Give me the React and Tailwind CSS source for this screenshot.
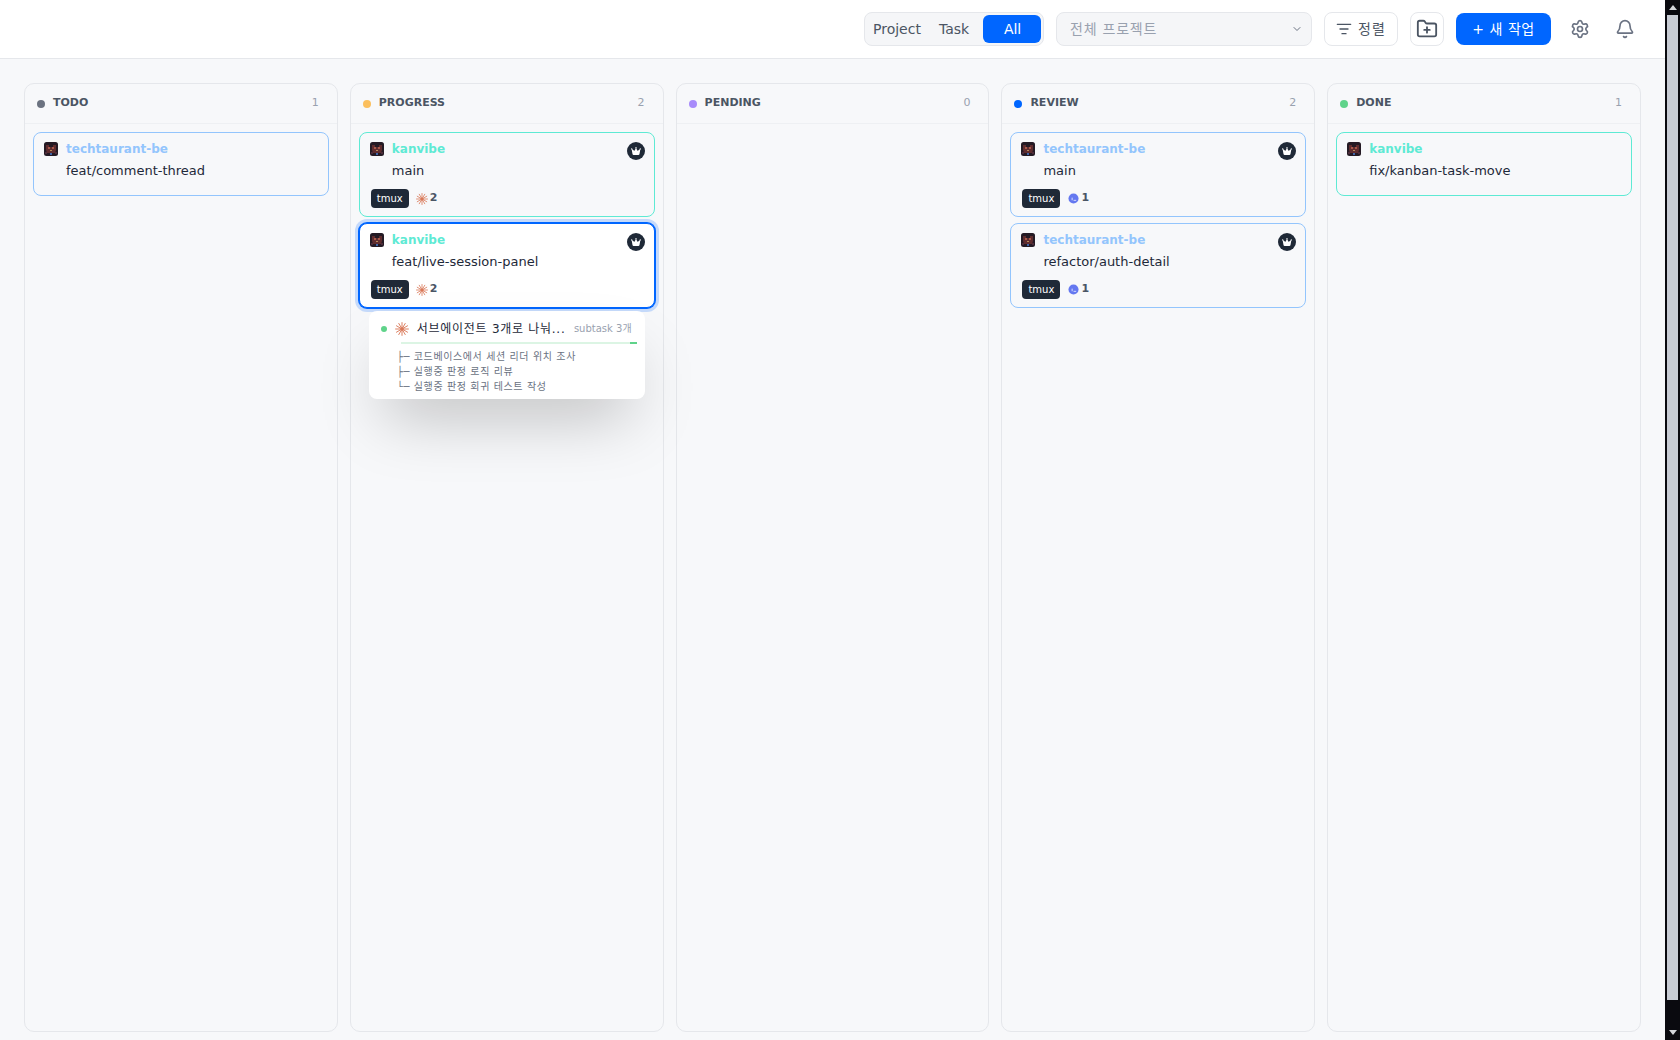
import React from "react";
import { ChevronDown, ListFilter, FolderPlus, Settings, Bell } from "lucide-react";
import { FaCrown } from "react-icons/fa6";

const COLUMNS = [
  {
    title: "TODO",
    dot: "bg-[#6b7280]",
    count: 1,
    cards: [{ project: "techtaurant-be", branch: "feat/comment-thread" }],
  },
  {
    title: "PROGRESS",
    dot: "bg-[#fbbf5d]",
    count: 2,
    cards: [
      { project: "kanvibe", branch: "main", leader: true, agent: "claude", agents: 2 },
      { project: "kanvibe", branch: "feat/live-session-panel", leader: true, agent: "claude", agents: 2, selected: true },
    ],
  },
  { title: "PENDING", dot: "bg-[#a78bfa]", count: 0, cards: [] },
  {
    title: "REVIEW",
    dot: "bg-[#0066ff]",
    count: 2,
    cards: [
      { project: "techtaurant-be", branch: "main", leader: true, agent: "blue", agents: 1 },
      { project: "techtaurant-be", branch: "refactor/auth-detail", leader: true, agent: "blue", agents: 1 },
    ],
  },
  {
    title: "DONE",
    dot: "bg-[#5fd38a]",
    count: 1,
    cards: [{ project: "kanvibe", branch: "fix/kanban-task-move" }],
  },
];

const SUBTASKS = [
  "├─ 코드베이스에서 세션 리더 위치 조사",
  "├─ 실행중 판정 로직 리뷰",
  "└─ 실행중 판정 회귀 테스트 작성",
];

const Burst = ({ className }) => (
  <svg viewBox="0 0 24 24" className={className} stroke="#d97757" strokeWidth="1.6" strokeLinecap="round">
    <path d="M12 1v22M1 12h22M6.5 2.5l11 19M17.5 2.5l-11 19M2.5 6.5l19 11M21.5 6.5l-19 11" />
    <circle cx="12" cy="12" r="3" fill="#d97757" stroke="none" />
  </svg>
);

const BlueAgent = ({ className }) => (
  <svg viewBox="0 0 24 24" className={className}>
    <circle cx="12" cy="12" r="11" fill="#6478f0" />
    <path d="M9 11v4M13 16h4" stroke="#dfe4ff" strokeWidth="2" strokeLinecap="round" />
  </svg>
);

const Avatar = () => (
  <svg viewBox="0 0 14 14" className="h-3.5 w-3.5 shrink-0">
    <rect width="14" height="14" rx="2.5" fill="#241a24" />
    <path d="M2 3h3v2h4V3h3v5l-1 3H3L2 8z" fill="#5f2c2e" />
    <rect x="4" y="5" width="2" height="2" fill="#a8584a" />
    <rect x="8" y="5" width="2" height="2" fill="#a8584a" />
    <rect x="6" y="8" width="2" height="1" fill="#b88a5a" />
    <rect x="6" y="11" width="2" height="2" fill="#3f64a8" />
    <rect x="1" y="10" width="2" height="2" fill="#4d2c3a" />
    <rect x="11" y="10" width="2" height="2" fill="#4d2c3a" />
  </svg>
);

const Popover = () => (
  <div className="absolute left-[9px] right-[9px] top-[calc(100%+4px)] z-10 h-[88px] rounded-lg bg-white shadow-[0_32px_64px_-16px_rgba(0,0,0,0.25)]">
    <div className="box-border flex h-[31px] items-center pl-3 pr-[13px] pt-1">
      <span className="h-1.5 w-1.5 shrink-0 rounded-full bg-[#5fd38a]" />
      <Burst className="ml-2 h-3.5 w-3.5 shrink-0" />
      <span className="ml-2 whitespace-nowrap text-xs tracking-[0.06em] text-gray-800">서브에이전트 3개로 나눠...</span>
      <span className="ml-auto text-[10px] text-gray-400">subtask 3개</span>
    </div>
    <div className="ml-8 mr-2 h-0.5 bg-[#dcf5e4]">
      <div className="ml-auto h-0.5 w-[7px] bg-[#5fd38a]" />
    </div>
    <div className="ml-7 mt-[5px] text-[10px] leading-[15px] tracking-[0.06em] text-gray-500">
      {SUBTASKS.map((line) => (
        <div key={line}>{line}</div>
      ))}
    </div>
  </div>
);

const TaskCard = ({ card }) => {
  const nameColor = card.project === "kanvibe" ? "text-[#5eead4]" : "text-[#93c5fd]";
  const borderColor = card.selected
    ? "border-[#0066ff] bg-white shadow-[0_0_0_1px_#0066ff,0_0_0_4px_rgba(0,102,255,0.2)]"
    : card.project === "kanvibe"
      ? "border-[#5eead4]"
      : "border-[#93c5fd]";

  return (
    <div className={`relative rounded-lg border pl-2.5 pr-[9px] pt-[9px] ${card.agents ? "pb-2" : "pb-3.5"} ${borderColor}`}>
      <div className="flex h-3.5 items-center gap-2">
        <Avatar />
        <span className={`text-xs font-bold ${nameColor}`}>{card.project}</span>
      </div>
      {card.leader && (
        <span className="absolute right-[9px] top-[9px] flex h-[18px] w-[18px] items-center justify-center rounded-full bg-[#1f2937]">
          <FaCrown className="h-2.5 w-2.5 text-white" />
        </span>
      )}
      <div className="mt-[5px] pl-[22px] text-[13px] leading-5 text-gray-800">{card.branch}</div>
      {card.agents && (
        <div className="ml-px mt-2 flex items-center">
          <span className="flex h-[19px] w-[38px] items-center justify-center rounded bg-[#1f2937] pb-px text-[10px] text-white">tmux</span>
          {card.agent === "claude" ? <Burst className="ml-[7px] h-3 w-3" /> : <BlueAgent className="ml-[8px] h-[11px] w-[11px]" />}
          <span className="ml-0.5 text-[11px] font-bold text-gray-600">{card.agents}</span>
        </div>
      )}
      {card.selected && <Popover />}
    </div>
  );
};

const Column = ({ column }) => (
  <div className="rounded-[10px] border border-[#e5e7eb]">
    <div className="box-border flex h-10 items-center border-b border-[#eef0f3] pl-3 pr-[18px]">
      <span className={`mt-px h-2 w-2 rounded-full ${column.dot}`} />
      <span className="ml-2 text-[11px] font-bold text-[#4b5563]">{column.title}</span>
      <span className="ml-auto text-[11px] text-gray-400">{column.count}</span>
    </div>
    <div className="flex flex-col gap-1.5 p-2">
      {column.cards.map((card) => (
        <TaskCard key={card.branch + card.project} card={card} />
      ))}
    </div>
  </div>
);

const Header = () => (
  <header className="flex h-[59px] shrink-0 items-center justify-end gap-3 border-b border-[#e5e7eb] bg-white pr-[22px]">
    <div className="flex h-[34px] w-[180px] items-center rounded-lg border border-[#e5e7eb] bg-[#f5f6f8] pl-2 pr-0.5 text-sm text-[#4b5563]">
      <span>Project</span>
      <span className="ml-[18px]">Task</span>
      <span className="ml-[14px] flex h-7 w-[59px] items-center justify-center rounded-md bg-[#0066ff] pl-px text-white">All</span>
    </div>
    <div className="flex h-[34px] w-[256px] items-center justify-between rounded-lg border border-[#e5e7eb] bg-[#f5f6f8] pl-[13px] pr-2 text-sm text-gray-400">
      <span className="tracking-[0.055em]">전체 프로젝트</span>
      <ChevronDown className="h-3 w-3 text-gray-500" />
    </div>
    <button className="flex h-[34px] w-[74px] items-center justify-center gap-1.5 rounded-lg border border-[#e5e7eb] bg-white text-sm text-[#4b5563]">
      <ListFilter className="h-4 w-4" />
      <span className="tracking-[0.08em]">정렬</span>
    </button>
    <button className="flex h-[34px] w-[34px] items-center justify-center rounded-lg border border-[#e5e7eb] bg-white text-[#4b5563]">
      <FolderPlus className="h-[22px] w-[22px]" />
    </button>
    <button className="flex h-8 w-[95px] items-center justify-center rounded-lg bg-[#0066ff] text-sm tracking-[0.04em] text-white">+ 새 작업</button>
    <button className="-ml-px flex h-9 w-9 items-center justify-center text-gray-500">
      <Settings className="h-5 w-5" />
    </button>
    <button className="-ml-[3px] flex h-9 w-9 items-center justify-center text-gray-500">
      <Bell className="h-5 w-5" />
    </button>
  </header>
);

const Scrollbar = () => (
  <div className="flex h-screen w-[15px] shrink-0 flex-col items-center bg-[#0a0a0f]">
    <div className="flex h-[15px] items-center justify-center">
      <span className="h-0 w-0 border-x-[4px] border-b-[5px] border-x-transparent border-b-[#d4d6da]" />
    </div>
    <div className="h-[985px] w-[11px] bg-[#c8ccd4]" />
    <div className="mt-auto flex h-[15px] items-center justify-center">
      <span className="h-0 w-0 border-x-[4px] border-t-[5px] border-x-transparent border-t-[#d4d6da]" />
    </div>
  </div>
);

const App = () => (
  <div className="flex h-screen overflow-hidden bg-[#f7f8fa] font-['DejaVu_Sans','Noto_Sans_CJK_JP',sans-serif]">
    <div className="flex min-w-0 flex-1 flex-col">
      <Header />
      <main className="grid min-h-0 flex-1 grid-cols-5 gap-3 px-6 pb-2 pt-6">
        {COLUMNS.map((column) => (
          <Column key={column.title} column={column} />
        ))}
      </main>
    </div>
    <Scrollbar />
  </div>
);

export default App;
